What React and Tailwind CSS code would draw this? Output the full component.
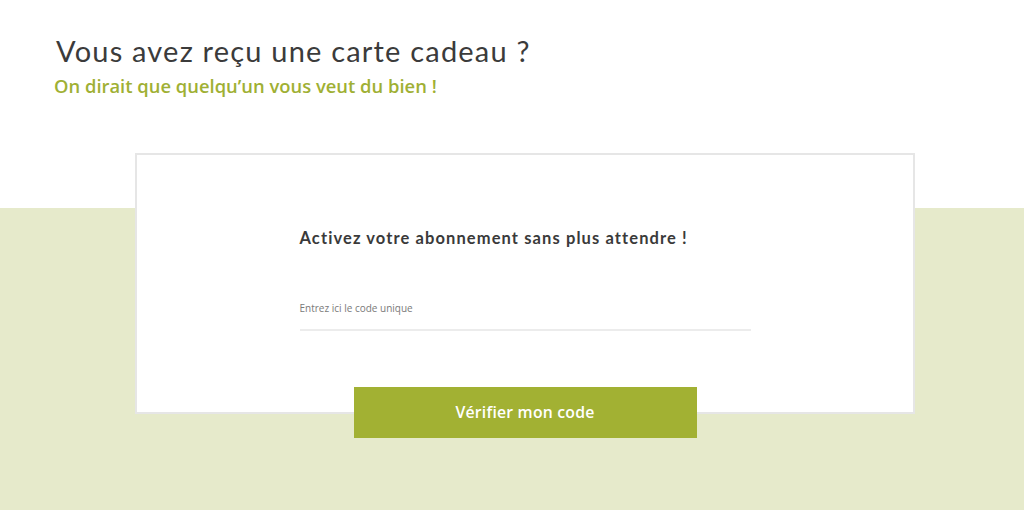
export default function App() {
  return (
    <div className="min-h-[510px] w-full bg-[linear-gradient(to_bottom,#ffffff_208px,#e6eacb_208px)] font-['Open_Sans',sans-serif]">
      <div className="pl-[56px] pt-[33px]">
        <h1 className="font-['Lato',sans-serif] text-[29px] leading-[36px] tracking-[1.2px] text-[#3b3b3b]">
          Vous avez reçu une carte cadeau ?
        </h1>
        <p className="-ml-[2px] mt-[5px] text-[18.4px] font-semibold leading-[24px] text-[#9fb034]">
          On dirait que quelqu’un vous veut du bien !
        </p>
      </div>
      <div className="ml-[135px] mt-[55px] w-[780px]">
        <div className="flex h-[261px] flex-col items-center border-2 border-[#e6e6e6] bg-white">
          <div className="mt-[72px] w-[451px]">
            <h2 className="font-['Lato',sans-serif] text-[16.5px] font-bold leading-[22px] tracking-[1.1px] text-[#3a3a3a]">
              Activez votre abonnement sans plus attendre !
            </h2>
            <div className="mt-[52px] border-b-2 border-[#ececec] pb-[14px] text-[10px] leading-[14px] text-[#7a7a7a]">
              Entrez ici le code unique
            </div>
          </div>
        </div>
        <div className="-mt-[27px] flex justify-center">
          <button className="h-[51px] w-[343px] bg-[#a2b133] text-[15.8px] font-semibold tracking-[0.2px] text-white">
            Vérifier mon code
          </button>
        </div>
      </div>
    </div>
  );
}
